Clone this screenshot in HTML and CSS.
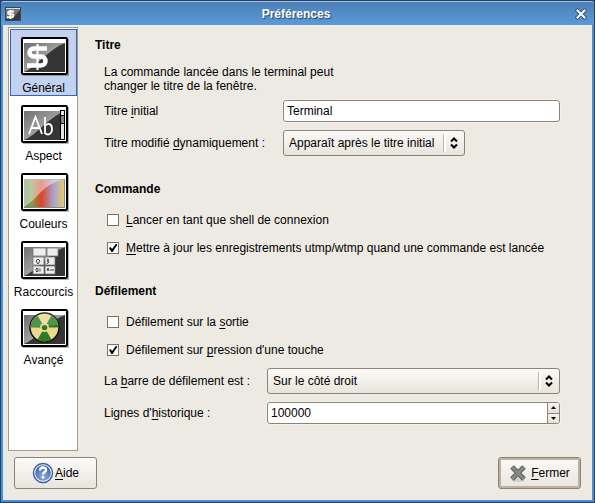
FILE: index.html
```html
<!DOCTYPE html>
<html lang="fr">
<head>
<meta charset="utf-8">
<meta name="viewport" content="width=device-width, initial-scale=1">
<title>Préférences</title>
<link rel="stylesheet" href="styles.css">
</head>
<body>
<div class="window">
  <header class="titlebar">
    <svg class="app-icon" width="16" height="14" viewBox="0 0 16 14" aria-hidden="true">
      <rect x=".5" y=".5" width="15" height="13" fill="#383838" stroke="#33475f"/>
      <path d="M1 2h14v1L7 12H1z" fill="#777"/>
      <path d="M1 1.5h14" stroke="#ddd"/>
      <path d="M9 4.500H4.500c-2 0-2 2.700 0 2.700h2c2.500 0 2.500 3 0 3H2M5.500 3v9" fill="none" stroke="#fff" stroke-width="1.800"/>
    </svg>
    <h1>Préférences</h1>
    <button class="close" type="button" aria-label="Fermer la fenêtre">
      <svg width="12" height="12" viewBox="0 0 12 12"><path d="M2.500 2.500l7 7M9.500 2.500l-7 7" stroke="#33567f" stroke-width="4" stroke-linecap="square"/><path d="M2.500 2.500l7 7M9.500 2.500l-7 7" stroke="#fff" stroke-width="2" stroke-linecap="square"/></svg>
    </button>
  </header>

  <svg class="defs" width="0" height="0" aria-hidden="true">
    <defs>
      <linearGradient id="gloss" x1="0" y1="0" x2="1" y2="1"><stop offset="0" stop-color="#707070"/><stop offset=".55" stop-color="#a4a4a4"/></linearGradient>
      <linearGradient id="rainbow"><stop offset="0" stop-color="#5f9a45"/><stop offset=".18" stop-color="#8a9a50"/><stop offset=".42" stop-color="#dd4226"/><stop offset=".72" stop-color="#a8a0cc"/><stop offset="1" stop-color="#e8cd70"/></linearGradient>
      <radialGradient id="help" cx=".5" cy=".75" r=".7"><stop offset="0" stop-color="#8fb0dc"/><stop offset="1" stop-color="#3b62a5"/></radialGradient>
      <g id="frame">
        <path d="M2 38.500h45.500V2" fill="none" stroke="#000" stroke-opacity=".3"/>
        <rect x="1" y="1" width="45" height="36" rx="1" fill="#fff" stroke="#000" stroke-width="2"/>
        <rect x="3" y="6" width="41" height="29" fill="#353535"/>
      </g>
      <path id="shine" d="M3 6h41C36 9 30 14 23 20S12 31 3 35z" fill="url(#gloss)"/>
    </defs>
  </svg>

  <main class="body">
    <nav class="sidebar" aria-label="Catégories">
      <button class="page selected" type="button" aria-current="page">
        <svg width="49" height="40" viewBox="0 0 49 40"><use href="#frame"/><use href="#shine"/><path d="M26 11.500H13c-6 0-6 8 0 8h7c6 0 6 9 0 9H6" fill="none" stroke="#fff" stroke-width="4.500"/><path d="M16.500 7v26" stroke="#fff" stroke-width="2"/></svg>
        <span>Général</span>
      </button>
      <button class="page" type="button">
        <svg width="49" height="40" viewBox="0 0 49 40"><use href="#frame"/><use href="#shine"/><path d="M8 29L14.500 12 21 29M10 23h9M24 12v17M24 21c3-4 7-2 7 3s-4 7-7 4" fill="none" stroke="#fff" stroke-width="1.800"/><rect x="39.500" y="5.500" width="4" height="29" fill="#e2e2e2" stroke="#000"/><path d="M39.500 10.500h4v8h-4z" fill="#888" stroke="#000"/></svg>
        <span>Aspect</span>
      </button>
      <button class="page" type="button">
        <svg width="49" height="40" viewBox="0 0 49 40"><use href="#frame"/><rect x="3.500" y="6.500" width="40" height="28" fill="url(#rainbow)" stroke="#888"/><path d="M3 6h41C34 8 26 13 20 19S12 28 3 34z" fill="#fff" opacity=".45"/></svg>
        <span>Couleurs</span>
      </button>
      <button class="page" type="button">
        <svg width="49" height="40" viewBox="0 0 49 40"><use href="#frame"/><use href="#shine"/><g fill="#eee" stroke="#777" stroke-width=".8"><rect x="12" y="7" width="13" height="8"/><rect x="26" y="7" width="11" height="8"/><rect x="12" y="16" width="11" height="8"/><rect x="24" y="16" width="10" height="8"/><rect x="12" y="25" width="11" height="8"/><rect x="24" y="25" width="10" height="8"/></g><path d="M17 18l-2 2 2 3 2-3zM26 18l2 1-2 1 2 1-2 2M14 29h2M15 27.500h2v3h-2M19 27.500v3M26 30l1-3 1 3M30 28v2M32 28v2" fill="none" stroke="#444"/></svg>
        <span>Raccourcis</span>
      </button>
      <button class="page" type="button">
        <svg width="49" height="40" viewBox="0 0 49 40"><use href="#frame"/><use href="#shine"/><circle cx="23.500" cy="18.500" r="14.500" fill="#ecd98c" stroke="#111" stroke-width="1.500"/><g fill="#2b7c25"><path d="M23.500 18.500h-14A14 14 0 0 1 16.500 6.400z"/><path d="M23.500 18.500L30.500 6.400A14 14 0 0 1 37.500 18.500z"/><path d="M23.500 18.500L30.500 30.600A14 14 0 0 1 16.500 30.600z"/></g><circle cx="23.500" cy="18.500" r="4.500" fill="#ecd98c"/><circle cx="23.500" cy="18.500" r="2.800" fill="#2b7c25"/><path d="M9.500 19a14 14 0 0 1 28-3c-8 0-20 2-28 3z" fill="#fff" opacity=".18"/></svg>
        <span>Avançé</span>
      </button>
    </nav>

    <form class="content">
      <section>
        <h2>Titre</h2>
        <p>La commande lancée dans le terminal peut<br>changer le titre de la fenêtre.</p>
        <div class="fields title-fields">
          <label for="title">Titre <u>i</u>nitial</label>
          <input class="entry" id="title" type="text" value="Terminal">
          <label for="dynamic">Titre modifié <u>d</u>ynamiquement :</label>
          <div class="combo short">
            <select id="dynamic"><option>Apparaît après le titre initial</option></select>
            <svg width="8" height="12" viewBox="0 0 8 12"><path d="M1 4.500l3-3 3 3M1 7.500l3 3 3-3" fill="none" stroke="#000" stroke-width="2"/></svg>
          </div>
        </div>
      </section>

      <section>
        <h2>Commande</h2>
        <div class="checks">
          <label><input type="checkbox"><span><u>L</u>ancer en tant que shell de connexion</span></label>
          <label><input type="checkbox" checked><span><u>M</u>ettre à jour les enregistrements utmp/wtmp quand une commande est lancée</span></label>
        </div>
      </section>

      <section>
        <h2>Défilement</h2>
        <div class="checks">
          <label><input type="checkbox"><span>Défilement sur la <u>s</u>ortie</span></label>
          <label><input type="checkbox" checked><span>Défilement sur <u>p</u>ression d'une touche</span></label>
        </div>
        <div class="fields scroll-fields">
          <label for="bar">La <u>b</u>arre de défilement est :</label>
          <div class="combo">
            <select id="bar"><option>Sur le côté droit</option></select>
            <svg width="8" height="12" viewBox="0 0 8 12"><path d="M1 4.500l3-3 3 3M1 7.500l3 3 3-3" fill="none" stroke="#000" stroke-width="2"/></svg>
          </div>
          <label for="lines">Lignes d'<u>h</u>istorique :</label>
          <div class="spin">
            <input id="lines" type="text" inputmode="numeric" value="100000">
            <div class="steps">
              <button type="button" aria-label="Augmenter"><svg width="5" height="3" viewBox="0 0 5 3"><path d="M0 3h5L2.500 0z"/></svg></button>
              <button type="button" aria-label="Diminuer"><svg width="5" height="3" viewBox="0 0 5 3"><path d="M0 0h5L2.500 3z"/></svg></button>
            </div>
          </div>
        </div>
      </section>
    </form>
  </main>

  <footer class="actions">
    <button class="action" type="button">
      <svg width="22" height="22" viewBox="0 0 22 22" aria-hidden="true"><circle cx="11" cy="11" r="9.500" fill="#fff" stroke="#3c62a2" stroke-width="1.500"/><circle cx="11" cy="11" r="7.800" fill="url(#help)"/><path d="M8 8.500c0-4 6-4 6-.5 0 2-3 2-3 4.500M11 14v2.500" fill="none" stroke="#fff" stroke-width="2.400"/></svg>
      <span><u>A</u>ide</span>
    </button>
    <button class="action default" type="button">
      <svg width="18" height="18" viewBox="0 0 18 18" aria-hidden="true"><ellipse cx="9" cy="16" rx="7" ry="2" fill="#d5d1ca"/><path d="M3 3l12 12M15 3L3 15" stroke="#5c5f5a" stroke-width="5"/><path d="M3 3l12 12M15 3L3 15" stroke="#868984" stroke-width="3"/></svg>
      <span><u>F</u>ermer</span>
    </button>
  </footer>
</div>
</body>
</html>
```
FILE: styles.css
```css
* { box-sizing: border-box; }

body {
  margin: 0;
  background: #27405f;
  color: #000;
  font: 12px/14px "Liberation Sans", Arial, sans-serif;
}

button, input, select { font: inherit; color: inherit; margin: 0; }
u { text-underline-offset: 2px; text-decoration-thickness: 1px; }
svg { display: block; flex: none; }
.defs { position: absolute; }

.window {
  display: flex;
  flex-direction: column;
  min-height: 100vh;
  border: 1px solid #27405f;
  border-radius: 4px 4px 0 0;
  background: #4a90d9;
  padding: 0 2px 2px;
}

.titlebar {
  display: flex;
  align-items: center;
  gap: 4px;
  height: 24px;
  margin: 0 -2px;
  padding: 0 7px 0 4px;
  border-top: 1px solid #a6c5e8;
  border-radius: 3px 3px 0 0;
  background: linear-gradient(#4b7fb5, #5b9bd8);
}

.titlebar h1 {
  flex: 1;
  margin: 0;
  padding-right: 4px;
  text-align: center;
  font-size: 12px;
  color: #fff;
  text-shadow: 1px 1px 1px #27466b;
}

.close { padding: 0; border: 0; background: none; }

.body {
  flex: 1;
  display: flex;
  gap: 17px;
  padding: 2px 32px 6px 5px;
  background: #edeae3;
}

.sidebar {
  display: flex;
  flex-direction: column;
  gap: 1px;
  flex: none;
  width: 70px;
  border: 1px solid #a89c85;
  padding: 1px 0 0 1px;
  background: #fff;
}

.page {
  display: flex;
  flex-direction: column;
  align-items: center;
  gap: 4px;
  height: 67px;
  padding: 7px 0 0;
  border: 1px solid transparent;
  background: none;
}

.page svg { margin-left: 4px; }
.page span { white-space: nowrap; }
.page.selected { border-color: #2f68c4; background: #c3d2ee; }

.content { flex: 1; min-width: 0; padding-top: 10px; }

section { margin-bottom: 24px; }
section:first-child { margin-bottom: 25px; }
section:last-child { margin-bottom: 0; }

h2 { margin: 0 0 12px; font-size: 12px; line-height: 16px; }
p { margin: 0 0 7px 9px; }

.fields {
  display: grid;
  align-items: center;
  row-gap: 8px;
  margin-left: 9px;
}

.title-fields { grid-template-columns: 179px 1fr; }
.scroll-fields { grid-template-columns: 163px 1fr; margin-top: 7px; }

.entry, .spin {
  width: 100%;
  height: 22px;
  border: 1px solid #8f8373;
  border-radius: 3px;
  background: #fff;
  box-shadow: 0 0 0 1px #f3f1ec;
}

.entry { padding: 0 3px; }

.combo { position: relative; height: 26px; }
.combo.short { width: 182px; }

.combo select {
  appearance: none;
  width: 100%;
  height: 100%;
  padding: 0 24px 0 5px;
  border: 1px solid #8f8373;
  border-radius: 3px;
  background: linear-gradient(#fbfaf8, #e8e4dd);
}

.combo::after {
  content: "";
  position: absolute;
  top: 4px;
  bottom: 4px;
  right: 19px;
  width: 2px;
  border-left: 1px solid #bdb6a9;
  background: #fff;
}

.combo svg { position: absolute; top: 7px; right: 7px; pointer-events: none; }

.checks { display: grid; gap: 6px; margin-left: 12px; }
.checks label { display: flex; align-items: center; gap: 7px; height: 22px; }
.checks span { white-space: nowrap; }

.checks input {
  appearance: none;
  display: grid;
  place-items: center;
  flex: none;
  width: 12px;
  height: 12px;
  border: 1px solid #7d7262;
  background: #fff;
}

.checks input:checked::before {
  content: "";
  width: 8px;
  height: 8px;
  background: #000;
  clip-path: polygon(0 50%, 20% 38%, 38% 62%, 85% 0, 100% 0, 100% 15%, 45% 100%, 30% 100%);
}

.spin { display: flex; overflow: hidden; }
.spin input { flex: 1; min-width: 0; padding: 0 3px; border: 0; background: none; }

.steps { display: flex; flex-direction: column; width: 12px; border-left: 1px solid #8f8373; }

.steps button {
  flex: 1;
  display: grid;
  place-items: center;
  padding: 0;
  border: 0;
  background: linear-gradient(#f8f6f3, #e4dfd7);
}

.steps button + button { border-top: 1px solid #8f8373; }

.actions {
  display: flex;
  justify-content: space-between;
  padding: 0 11px 11px;
  background: #edeae3;
}

.action {
  display: flex;
  align-items: center;
  justify-content: center;
  gap: 1px;
  width: 83px;
  height: 32px;
  padding: 0;
  border: 1px solid #8f8373;
  border-radius: 3px;
  background: linear-gradient(#fbfaf8, #e9e5de);
}

.action.default {
  gap: 4px;
  box-shadow: inset 0 0 0 2px #bcb0a0;
}
```
